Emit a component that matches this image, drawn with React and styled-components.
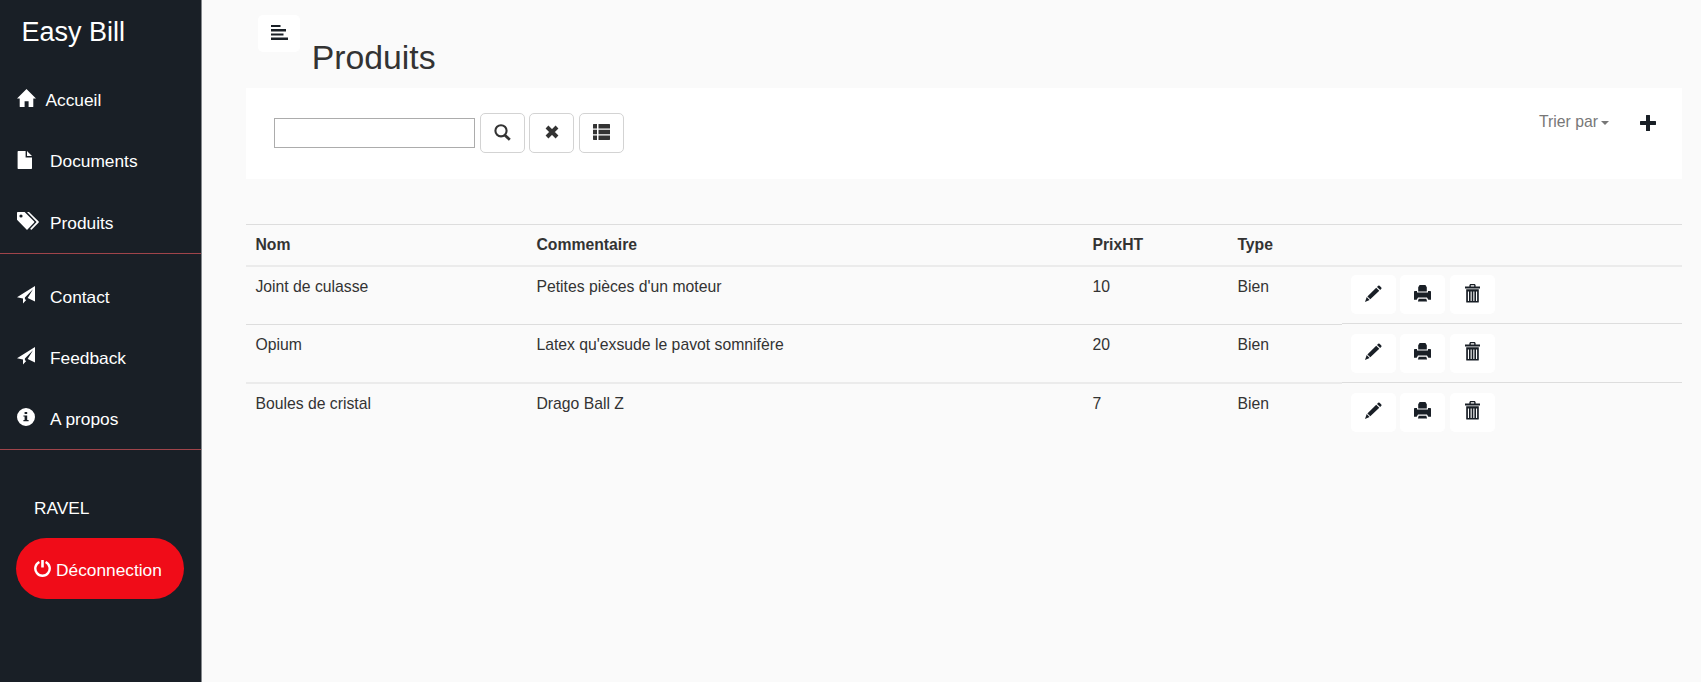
import React from "react";
import styled, { createGlobalStyle } from "styled-components";

const Global = createGlobalStyle`
  *, *::before, *::after { box-sizing: border-box; }
  body {
    margin: 0;
    background: #fafafa;
    color: #333;
    font-family: "Liberation Sans", Arial, sans-serif;
    font-size: 15.75px;
    line-height: 22.5px;
  }
`;

const Page = styled.div`
  display: flex;
  height: 682px;
  overflow: hidden;
`;

const Sidebar = styled.aside`
  flex: none;
  width: 202px;
  background: #191f26;
  border-right: 1px solid #84888c;
  color: #fff;
  font-size: 17.325px;
`;

const Brand = styled.div`
  height: 69.3px;
  padding: 14px 0 0 21.5px;
  font-size: 27px;
  line-height: 36px;
`;

const NavGroup = styled.nav`
  border-bottom: 1px solid #a0444a;
  margin-bottom: 12px;
`;

const NavItem = styled.a`
  display: flex;
  align-items: center;
  height: 61.2px;
  padding: 2px 0 1px 17px;
  color: #fff;
`;

const IconSlot = styled.span`
  display: flex;
  flex: none;
  width: ${(p) => p.$w || 33}px;
  margin-top: -4px;
`;

const User = styled.div`
  height: 61px;
  padding: 0 0 0 34px;
  margin-top: 27px;
  line-height: 62px;
`;

const Logout = styled.button`
  display: flex;
  align-items: center;
  gap: 5px;
  width: 168px;
  height: 61px;
  margin-left: 16px;
  padding: 2px 0 0 18px;
  border: 0;
  border-radius: 31px;
  background: #f00c18;
  color: #fff;
  font: inherit;
`;

const LogoutIcon = styled.span`
  display: flex;
  margin-top: -3px;
`;

const Main = styled.main`
  flex: 1;
  padding: 15px 19px 0 44.4px;
`;

const Header = styled.header`
  display: flex;
  align-items: flex-start;
  height: 73px;
  padding-left: 11.6px;
`;

const Title = styled.h1`
  margin: 23px 0 0 11.3px;
  font-size: 33.75px;
  font-weight: 400;
  line-height: 38px;
`;

const Button = styled.button`
  display: flex;
  flex: none;
  align-items: center;
  justify-content: center;
  width: ${(p) => p.$w || 45}px;
  height: ${(p) => p.$h || 39}px;
  padding: 0 0 ${(p) => p.$lift || 2}px;
  border: ${(p) => (p.$outlined ? "1px solid #d3d3d3" : "0")};
  border-radius: 5px;
  background: #fff;
  color: ${(p) => (p.$outlined ? "#333" : "#191f26")};
`;

const Toolbar = styled.section`
  display: flex;
  height: 91px;
  padding: 25px 26px 0 27.6px;
  background: #fff;
`;

const SearchInput = styled.input`
  width: 201px;
  height: 30px;
  margin: 5px 5px 0 0;
  border: 1px solid #acacac;
  background: #fff;
`;

const ButtonRow = styled.div`
  display: flex;
  gap: 4.5px;
`;

const ToolbarEnd = styled.div`
  display: flex;
  align-items: flex-start;
  margin-left: auto;
`;

const Sort = styled.a`
  display: flex;
  align-items: center;
  gap: 2.5px;
  margin: -2px 31.5px 0 0;
  color: #777;
`;

const Caret = styled.span`
  border-top: 4.5px solid #777;
  border-left: 4.5px solid transparent;
  border-right: 4.5px solid transparent;
  margin-top: 2px;
`;

const Add = styled.span`
  display: flex;
  margin-top: 2px;
  color: #191f26;
`;

const Table = styled.div`
  margin-top: 45px;
`;

const Row = styled.div`
  display: grid;
  grid-template-columns: 281px 556px 145px 113.5px 1fr;
  height: ${(p) => p.$h}px;
  font-weight: ${(p) => (p.$head ? 700 : 400)};
`;

const Cell = styled.div`
  padding: ${(p) => p.$top || 8}px 9px 0;
  border-top: ${(p) => (p.$soft ? "2px solid #ebebeb" : "1px solid #ddd")};
`;

const Actions = styled(Cell)`
  display: flex;
  gap: 4.5px;
  margin-top: ${(p) => p.$shift || 0}px;
`;

function Icon({ size = 16, w, h, box = "0 0 16 16", children }) {
  return (
    <svg width={w || size} height={h || size} viewBox={box} fill="currentColor" preserveAspectRatio="none">
      {children}
    </svg>
  );
}

const HomeIcon = () => (
  <Icon w={19} h={18} box="0 0 19 18">
    <path d="M9.5 0 L19 9.6 H16.3 V17.4 Q16.3 18 15.7 18 H11.6 V12.2 H7.6 V18 H3.3 Q2.7 18 2.7 17.4 V9.6 H0 Z" />
  </Icon>
);
const FileIcon = () => (
  <Icon w={16} h={18} box="0 0 16 18">
    <path d="M1.2 0 H8.6 V6.4 H15 V17.3 Q15 18 14.3 18 H1.2 Q.6 18 .6 17.3 V.7 Q.6 0 1.2 0 Z M10 0 L15 5 H10 Z" />
  </Icon>
);
const TagsIcon = () => (
  <Icon w={22} h={18} box="0 0 22 18">
    <path fillRule="evenodd" d="M.8 0 H7.6 L17.2 9.6 Q17.6 10 17.2 10.5 L10.5 17.4 Q10 17.9 9.5 17.4 L0 7.8 V.8 Q0 0 .8 0 Z M4 2.4 A1.6 1.6 0 1 0 4 5.6 A1.6 1.6 0 1 0 4 2.4 Z" />
    <path d="M10 0 H12 L21.7 9.6 Q22.1 10 21.7 10.5 L14.8 17.4 Q14.3 17.9 13.8 17.4 L13.2 16.8 L19.6 10 Z" />
  </Icon>
);
const PlaneIcon = () => (
  <Icon w={18} h={18} box="0 0 18 18">
    <path d="M18 0 V15.4 L10.7 12.1 L16 3.2 L7.9 11.6 V13.2 L9.2 14 L6 17.6 V12.4 L0 11.2 Z" />
  </Icon>
);
const InfoIcon = () => (
  <Icon w={18} h={18} box="0 0 18 18">
    <path fillRule="evenodd" d="M9 0 A9 9 0 1 1 9 18 A9 9 0 1 1 9 0 Z M7.6 4 V6 H10.2 V4 Z M6.4 7.4 V8.6 H7.6 V12 H6.4 V13.3 H11.6 V12 H10.2 V7.4 Z" />
  </Icon>
);
const PowerIcon = () => (
  <Icon w={17} h={17} box="0 0 17 17">
    <path d="M5.4 2 A7.2 7.2 0 1 0 11.6 2" fill="none" stroke="currentColor" strokeWidth="2.4" />
    <rect x="7.2" y="0" width="2.6" height="7.5" rx=".5" />
  </Icon>
);
const AlignLeftIcon = () => (
  <Icon w={17} h={15} box="0 0 17 15">
    <path d="M0 0 H9.5 V2 H0 Z M0 4 H15 V6.4 H0 Z M0 8.4 H12.5 V10.4 H0 Z M0 12.4 H17 V15 H0 Z" />
  </Icon>
);
const SearchIcon = () => (
  <Icon w={17} h={17} box="0 0 17 17">
    <circle cx="7" cy="6.8" r="5.6" fill="none" stroke="currentColor" strokeWidth="2.1" />
    <path d="M10.7 11 L15.8 15.7" stroke="currentColor" strokeWidth="2.8" />
  </Icon>
);
const RemoveIcon = () => (
  <Icon w={14} h={14} box="0 0 14 14">
    <path d="M2 2 L12 12 M12 2 L2 12" stroke="currentColor" strokeWidth="4" />
  </Icon>
);
const ListIcon = () => (
  <Icon w={17} h={16} box="0 0 17 16">
    <path d="M.5 0 H4 V4.4 H0 V.5 Z M5.5 0 H16.5 L17 .5 V4.4 H5.5 Z M0 5.8 H4 V10.2 H0 Z M5.5 5.8 H17 V10.2 H5.5 Z M0 11.6 H4 V16 H.5 L0 15.5 Z M5.5 11.6 H17 V15.5 L16.5 16 H5.5 Z" />
  </Icon>
);
const PlusIcon = () => (
  <Icon w={16} h={16} box="0 0 16 16">
    <path d="M6.4 0 H9.6 Q10 0 10 .5 V6 H15.5 Q16 6 16 6.4 V9.6 Q16 10 15.5 10 H10 V15.5 Q10 16 9.6 16 H6.4 Q6 16 6 15.5 V10 H.5 Q0 10 0 9.6 V6.4 Q0 6 .5 6 H6 V.5 Q6 0 6.4 0 Z" />
  </Icon>
);
const PencilIcon = () => (
  <Icon w={17} h={17} box="0 0 17 17">
    <path d="M13.2 .8 Q13.9 .1 14.6 .8 L16.3 2.4 Q17 3.1 16.3 3.8 L15.2 4.9 L12 1.9 Z M11.2 2.8 L14.3 5.8 L5.3 14.3 L2.4 11.4 Z M1.7 12.1 L4.6 15 L0 17 Z" />
  </Icon>
);
const PrintIcon = () => (
  <Icon w={17} h={17} box="0 0 17 17">
    <path d="M5.6 0 H11.4 L12.8 2.2 V6.4 H4.2 V2.2 Z M.8 6 H3 V7.4 H14 V6 H16.2 Q17 6 17 6.8 V14.8 H14.3 L13 12.4 H4 L2.7 14.8 H0 V6.8 Q0 6 .8 6 Z M4.7 13.7 H12.3 L13.1 16.6 H3.9 Z" />
  </Icon>
);
const TrashIcon = () => (
  <Icon w={15} h={19} box="0 0 15 19">
    <path fillRule="evenodd" d="M5.2 0 H9.8 L10.6 1 V2.4 H15 V4.4 H0 V2.4 H4.4 V1 Z M5.8 1.3 V2.4 H9.2 V1.3 Z M1.2 5.2 H13.8 V18 Q13.8 18.6 13.2 18.6 H1.8 Q1.2 18.6 1.2 18 Z M2.9 7.4 V17 H4 V7.4 Z M5.6 7.4 V17 H6.7 V7.4 Z M8.3 7.4 V17 H9.4 V7.4 Z M11 7.4 V17 H12.1 V7.4 Z" />
  </Icon>
);

const primaryLinks = [
  { label: "Accueil", icon: HomeIcon, slot: 28.5 },
  { label: "Documents", icon: FileIcon },
  { label: "Produits", icon: TagsIcon },
];
const secondaryLinks = [
  { label: "Contact", icon: PlaneIcon },
  { label: "Feedback", icon: PlaneIcon },
  { label: "A propos", icon: InfoIcon },
];
const products = [
  { name: "Joint de culasse", comment: "Petites pièces d'un moteur", price: 10, type: "Bien", h: 59, soft: true, softEnd: true, top: 8.5 },
  { name: "Opium", comment: "Latex qu'exsude le pavot somnifère", price: 20, type: "Bien", h: 58, top: 8.5, shift: -1 },
  { name: "Boules de cristal", comment: "Drago Ball Z", price: 7, type: "Bien", h: 58, soft: true, top: 8.5 },
];

const Links = ({ items }) => (
  <NavGroup>
    {items.map(({ label, icon: Glyph, slot }) => (
      <NavItem key={label}>
        <IconSlot $w={slot}>
          <Glyph />
        </IconSlot>
        {label}
      </NavItem>
    ))}
  </NavGroup>
);

export default function App() {
  return (
    <Page>
      <Global />
      <Sidebar>
        <Brand>Easy Bill</Brand>
        <Links items={primaryLinks} />
        <Links items={secondaryLinks} />
        <User>RAVEL</User>
        <Logout>
          <LogoutIcon>
            <PowerIcon />
          </LogoutIcon>
          Déconnection
        </Logout>
      </Sidebar>
      <Main>
        <Header>
          <Button $w={42.5} $h={37} $lift={2}>
            <AlignLeftIcon />
          </Button>
          <Title>Produits</Title>
        </Header>
        <Toolbar>
          <SearchInput />
          <ButtonRow>
            <Button $outlined $h={40} $lift={2}><SearchIcon /></Button>
            <Button $outlined $h={40} $lift={2}><RemoveIcon /></Button>
            <Button $outlined $h={40} $lift={2}><ListIcon /></Button>
          </ButtonRow>
          <ToolbarEnd>
            <Sort>
              Trier par
              <Caret />
            </Sort>
            <Add>
              <PlusIcon />
            </Add>
          </ToolbarEnd>
        </Toolbar>
        <Table>
          <Row $head $h={41}>
            <Cell $top={9}>Nom</Cell>
            <Cell $top={9}>Commentaire</Cell>
            <Cell $top={9}>PrixHT</Cell>
            <Cell $top={9}>Type</Cell>
            <Cell />
          </Row>
          {products.map((p) => (
            <Row key={p.name} $h={p.h}>
              <Cell $soft={p.soft} $top={p.top}>{p.name}</Cell>
              <Cell $soft={p.soft} $top={p.top}>{p.comment}</Cell>
              <Cell $soft={p.soft} $top={p.top}>{p.price}</Cell>
              <Cell $soft={p.soft} $top={p.top}>{p.type}</Cell>
              <Actions $soft={p.softEnd} $shift={p.shift} $top={p.softEnd ? 8 : 9.5}>
                <Button $lift={3}><PencilIcon /></Button>
                <Button $lift={3}><PrintIcon /></Button>
                <Button $lift={3}><TrashIcon /></Button>
              </Actions>
            </Row>
          ))}
        </Table>
      </Main>
    </Page>
  );
}
